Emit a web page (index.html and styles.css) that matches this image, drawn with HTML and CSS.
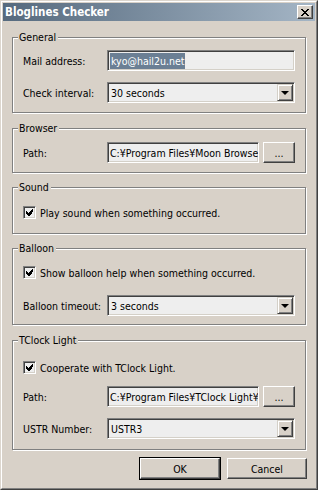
FILE: index.html
```html
<!DOCTYPE html>
<html lang="en">
<head>
  <meta charset="UTF-8">
  <title>Bloglines Checker</title>
  <link rel="stylesheet" href="styles.css">
</head>
<body>
  <div class="window">
    <div class="frame">
      <!-- Caption -->
      <div class="titlebar">
        <span class="title">Bloglines Checker</span>
        <span class="close-btn">
          <svg width="8" height="7" viewBox="0 0 8 7" shape-rendering="crispEdges">
            <path d="M0 0h2v1h-2zM6 0h2v1h-2zM1 1h2v1h-2zM5 1h2v1h-2zM2 2h4v1h-4zM3 3h2v1h-2zM2 4h4v1h-4zM1 5h2v1h-2zM5 5h2v1h-2zM0 6h2v1h-2zM6 6h2v1h-2z" fill="#000"/>
          </svg>
        </span>
      </div>

      <div class="client">
        <!-- General -->
        <div class="group group-general">
          <span class="group-title">General</span>
          <div class="row first">
            <span class="label">Mail address:</span>
            <div class="edit"><span class="selected">kyo@hail2u.net</span></div>
          </div>
          <div class="row second">
            <span class="label">Check interval:</span>
            <div class="combo">
              <span class="combo-text">30 seconds</span>
              <span class="combo-btn"><span class="arrow"></span></span>
            </div>
          </div>
        </div>

        <!-- Browser -->
        <div class="group group-browser">
          <span class="group-title">Browser</span>
          <div class="row first">
            <span class="label">Path:</span>
            <div class="edit path">C:¥Program Files¥Moon Browse</div>
            <button class="btn browse">...</button>
          </div>
        </div>

        <!-- Sound -->
        <div class="group group-sound">
          <span class="group-title">Sound</span>
          <div class="row check-row first">
            <span class="check"><svg width="7" height="7" viewBox="0 0 7 7" shape-rendering="crispEdges"><path d="M6 0h1v3h-1zM5 1h1v4h-1zM4 2h1v4h-1zM3 3h1v4h-1zM2 4h1v3h-1zM1 3h1v3h-1zM0 2h1v3h-1z" fill="#000"/></svg></span>
            <span class="check-text">Play sound when something occurred.</span>
          </div>
        </div>

        <!-- Balloon -->
        <div class="group group-balloon">
          <span class="group-title">Balloon</span>
          <div class="row check-row first">
            <span class="check"><svg width="7" height="7" viewBox="0 0 7 7" shape-rendering="crispEdges"><path d="M6 0h1v3h-1zM5 1h1v4h-1zM4 2h1v4h-1zM3 3h1v4h-1zM2 4h1v3h-1zM1 3h1v3h-1zM0 2h1v3h-1z" fill="#000"/></svg></span>
            <span class="check-text">Show balloon help when something occurred.</span>
          </div>
          <div class="row second">
            <span class="label">Balloon timeout:</span>
            <div class="combo">
              <span class="combo-text">3 seconds</span>
              <span class="combo-btn"><span class="arrow"></span></span>
            </div>
          </div>
        </div>

        <!-- TClock Light -->
        <div class="group group-tclock">
          <span class="group-title">TClock Light</span>
          <div class="row check-row first">
            <span class="check"><svg width="7" height="7" viewBox="0 0 7 7" shape-rendering="crispEdges"><path d="M6 0h1v3h-1zM5 1h1v4h-1zM4 2h1v4h-1zM3 3h1v4h-1zM2 4h1v3h-1zM1 3h1v3h-1zM0 2h1v3h-1z" fill="#000"/></svg></span>
            <span class="check-text">Cooperate with TClock Light.</span>
          </div>
          <div class="row path-row">
            <span class="label">Path:</span>
            <div class="edit path">C:¥Program Files¥TClock Light¥</div>
            <button class="btn browse">...</button>
          </div>
          <div class="row second">
            <span class="label">USTR Number:</span>
            <div class="combo">
              <span class="combo-text">USTR3</span>
              <span class="combo-btn"><span class="arrow"></span></span>
            </div>
          </div>
        </div>

        <!-- Dialog buttons -->
        <div class="buttons">
          <button class="btn default">OK</button>
          <button class="btn">Cancel</button>
        </div>
      </div>
    </div>
  </div>
</body>
</html>
```

FILE: styles.css
```css
* {
  box-sizing: border-box;
}

body {
  margin: 0;
  background: #d8d1c8;
  font-family: "DejaVu Sans Condensed", "Liberation Sans", sans-serif;
  font-stretch: condensed;
  font-size: 10.5px;
  color: #000;
}

.window {
  width: 318px;
  height: 490px;
  border: 1px solid;
  border-color: #dcd6ce #404040 #404040 #dcd6ce;
  background: #d8d1c8;
}

.frame {
  height: 100%;
  border: 1px solid;
  border-color: #fff #808080 #808080 #fff;
  padding: 1px;
  display: flex;
  flex-direction: column;
}

/* caption */
.titlebar {
  height: 18px;
  background: linear-gradient(to right, #566a7e, #a4b5c5);
  display: flex;
  align-items: center;
  justify-content: space-between;
  padding: 0 2px 0 2px;
}

.title {
  color: #fff;
  font-weight: bold;
  font-size: 11.5px;
}

.close-btn {
  width: 16px;
  height: 14px;
  background: #d8d1c8;
  border: 1px solid;
  border-color: #fff #404040 #404040 #fff;
  box-shadow: inset -1px -1px 0 #808080;
  display: flex;
  align-items: center;
  justify-content: center;
}

.client {
  flex: 1;
  padding: 16px 9px 0 9px;
  display: flex;
  flex-direction: column;
}

/* group boxes */
.group {
  border: 1px solid #808080;
  box-shadow: 1px 1px 0 #fff, inset 1px 1px 0 #fff;
  padding: 0 10px 9px 10px;
  display: flex;
  flex-direction: column;
}

.group-browser {
  margin-top: 15px;
}

.group-sound {
  margin-top: 14px;
  padding-bottom: 10px;
}

.group-balloon {
  margin-top: 14px;
  padding-bottom: 8px;
}

.group-tclock {
  margin-top: 15px;
  padding-bottom: 10px;
}

.group-title {
  align-self: flex-start;
  margin: -7px 0 0 -5px;
  padding: 0 2px 0 1px;
  line-height: 13px;
  background: #d8d1c8;
}

.row {
  display: flex;
  align-items: center;
  height: 21px;
}

.row.first {
  margin-top: 6px;
}

.row.second {
  margin-top: 11px;
}

.group-browser .row.first,
.group-balloon .row.first {
  margin-top: 7px;
}

.group-sound .row.first {
  margin-top: 8px;
}

.group-balloon .row.second {
  margin-top: 12px;
}

.group-tclock .row.first {
  margin-top: 10px;
}

.row.path-row {
  margin-top: 8px;
}

.label {
  width: 84px;
  flex-shrink: 0;
}

/* sunken controls */
.edit,
.combo {
  flex: 1;
  height: 21px;
  border: 1px solid;
  border-color: #808080 #fff #fff #808080;
  box-shadow: inset 1px 1px 0 #404040, inset -1px -1px 0 #d4d0c8;
  background: #eeeeee;
  display: flex;
  align-items: center;
  white-space: nowrap;
  overflow: hidden;
}

.edit {
  padding: 0 2px;
}

.edit.path {
  flex: 0 0 152px;
}

.selected {
  background: #6b7f94;
  color: #fff;
  line-height: 16px;
  padding: 0 1px;
}

.combo {
  padding: 1px 1px 1px 3px;
}

.combo-text {
  flex: 1;
}

.combo-btn {
  width: 16px;
  height: 17px;
  background: #d8d1c8;
  border: 1px solid;
  border-color: #d4d0c8 #404040 #404040 #d4d0c8;
  box-shadow: inset 1px 1px 0 #fff, inset -1px -1px 0 #808080;
  display: flex;
  align-items: center;
  justify-content: center;
}

.arrow {
  width: 0;
  height: 0;
  border-left: 4px solid transparent;
  border-right: 4px solid transparent;
  border-top: 4px solid #000;
  margin-top: 1px;
}

/* checkboxes */
.check {
  width: 13px;
  height: 13px;
  flex-shrink: 0;
  border: 1px solid;
  border-color: #808080 #fff #fff #808080;
  box-shadow: inset 1px 1px 0 #404040, inset -1px -1px 0 #d4d0c8;
  background: #eeeeee;
  display: flex;
  align-items: center;
  justify-content: center;
}

.check-text {
  margin-left: 4px;
}

/* push buttons */
.btn {
  font-family: inherit;
  font-size: 10.5px;
  color: #000;
  background: #d8d1c8;
  border: 1px solid;
  border-color: #fff #404040 #404040 #fff;
  box-shadow: inset -1px -1px 0 #808080;
  padding: 0;
  height: 21px;
}

.browse {
  width: 32px;
  margin-left: 4px;
  flex-shrink: 0;
}

.buttons {
  display: flex;
  justify-content: flex-end;
  gap: 7px;
  margin-top: 8px;
  margin-right: -1px;
}

.buttons .btn {
  width: 80px;
}

.btn.default {
  outline: 1px solid #000;
  outline-offset: 0;
}
```
